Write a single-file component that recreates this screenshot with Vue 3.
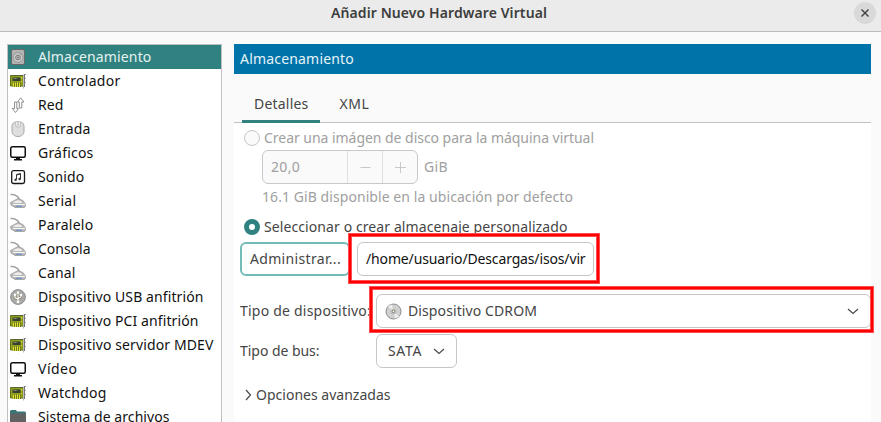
<script setup>
const items = [
  { label: 'Almacenamiento', icon: 'disk', w: 113.5 },
  { label: 'Controlador', icon: 'card', w: 82.5 },
  { label: 'Red', icon: 'net', w: 25.5 },
  { label: 'Entrada', icon: 'mouse', w: 52.5 },
  { label: 'Gráficos', icon: 'screen', w: 55.5 },
  { label: 'Sonido', icon: 'sound', w: 46.5 },
  { label: 'Serial', icon: 'port', w: 38.5 },
  { label: 'Paralelo', icon: 'port', w: 55.5 },
  { label: 'Consola', icon: 'port', w: 52.5 },
  { label: 'Canal', icon: 'port', w: 37.5 },
  { label: 'Dispositivo USB anfitrión', icon: 'usb', w: 165.5 },
  { label: 'Dispositivo PCI anfitrión', icon: 'card', w: 160.5 },
  { label: 'Dispositivo servidor MDEV', icon: 'card', w: 175.5 },
  { label: 'Vídeo', icon: 'screen', w: 39.5 },
  { label: 'Watchdog', icon: 'card', w: 68.5 },
  { label: 'Sistema de archivos', icon: 'folder', w: 131.5 }
]

// Tracks a label so that it fills the given width in pixels.
const vFit = {
  mounted(el, { value }) {
    const natural = el.getBoundingClientRect().width
    el.style.letterSpacing = `${(value - natural) / el.textContent.length}px`
  }
}
</script>

<template>
  <div class="window">
    <header class="titlebar">
      <h1><span v-fit="216">Añadir Nuevo Hardware Virtual</span></h1>
      <button class="close" aria-label="Cerrar">
        <svg width="8" height="8" viewBox="0 0 8 8"><path d="M.5.5l7 7M7.5.5l-7 7" stroke="#3d3d3d" stroke-width="1.400" /></svg>
      </button>
    </header>

    <div class="body">
      <ul class="list">
        <li v-for="(item, i) in items" :key="item.label" :class="{ selected: i === 0 }">
          <svg class="icon" width="16" height="16" viewBox="0 0 16 16">
            <g v-if="item.icon === 'disk'">
              <rect x="1.5" y=".5" width="13" height="15" rx="1.5" fill="#b4b4b4" stroke="#696969" />
              <circle cx="8" cy="8.500" r="5" fill="#c6c6c6" stroke="#979797" />
              <circle cx="8" cy="8.500" r="2.300" fill="#bdbdbd" stroke="#777" />
              <path d="M8.500 8l3-4" stroke="#999" />
              <circle cx="8" cy="8.500" r=".8" fill="#666" />
            </g>
            <g v-else-if="item.icon === 'card'">
              <path d="M.5 2.500h13v10.500H.5z" fill="#8f9e1d" stroke="#65701a" />
              <path d="M1 2.500h12" stroke="#5c6534" />
              <path d="M2.500 4.500h8v3.500h-8z" fill="#383f33" />
              <path d="M3.500 5.500h3" stroke="#7c8570" />
              <path d="M11.500 4v2M11.500 8v1" stroke="#c9cf42" />
              <path d="M3 9.500v4.500h8V9.500z" fill="#727c16" />
              <path d="M3.500 9.500v4.500M5.500 9.500v4.500M7.500 9.500v4.500M9.500 9.500v4.500" stroke="#dde03a" />
              <path d="M13.500 1.500v14" stroke="#b9bab4" />
              <path d="M14.500 1v13" stroke="#757575" />
              <path d="M15 1.500h1M15 5.500h1M15 9.500h1" stroke="#a5a5a5" />
            </g>
            <g v-else-if="item.icon === 'net'" fill="#fff" stroke="#858585" stroke-width=".9">
              <path d="M4.500 5h2.300v6.500H8.500l-3 4-3.300-4h2.300z" />
              <path d="M9.300 11V5H7.500l3.200-4.200L14 5h-2.200v6z" />
            </g>
            <g v-else-if="item.icon === 'mouse'">
              <path d="M2 6C2 2.500 3.500 .8 8 .8s6 1.700 6 5.200v4c0 3.500-2.500 5.500-6 5.500S2 13.500 2 10z" fill="#dedede" stroke="#a5a5a5" />
              <path d="M5.200 1.500L6 5.500q2 1.500 4 0l.8-4" fill="#f3f3f3" stroke="#b5b5b5" stroke-width=".8" />
              <path d="M8 1.500v3.500" stroke="#aaa" />
            </g>
            <g v-else-if="item.icon === 'screen'">
              <rect x=".75" y="1.750" width="14.500" height="10.500" rx="1.500" fill="#fff" stroke="#111" stroke-width="1.500" />
              <path d="M6 12.500h4V14h2v1.500H4V14h2z" fill="#111" />
            </g>
            <g v-else-if="item.icon === 'sound'">
              <rect x="1.700" y="1.700" width="12.800" height="12.800" rx="1.800" fill="#fff" stroke="#171717" stroke-width="1.300" />
              <path d="M6.500 10.500V5.500l4-1V10M6.500 6l4-1" fill="none" stroke="#333" />
              <circle cx="5.600" cy="10.700" r="1.200" fill="#333" /><circle cx="9.600" cy="10" r="1.200" fill="#333" />
            </g>
            <g v-else-if="item.icon === 'port'">
              <path d="M.5 1.500C5 1.200 8 3 9.500 6.500" fill="none" stroke="#a3a3a3" stroke-width="1.600" />
              <path d="M.5 9.500L8 5.500l5 2 2.300 3.500v2.500l-1 1H5L1 12z" fill="#bcbcbc" stroke="#9b9b9b" stroke-width=".8" />
              <path d="M1.500 9.500L8 6.500l4.500 2-1 2H5z" fill="#eee" stroke="#aaa" stroke-width=".6" />
              <path d="M3 11.500h12" stroke="#f4f4f4" />
              <path d="M5.500 13.300h6.500" stroke="#6a91c4" stroke-width="1.200" />
            </g>
            <g v-else-if="item.icon === 'usb'">
              <circle cx="8" cy="8" r="7.400" fill="#a9a9a9" stroke="#8d8d8d" />
              <g fill="none" stroke="#756f55" stroke-width="2.200"><path d="M8 3v9.500M8 10.500L5 8.500V6M8 9.500l3-1.500V6" /></g>
              <g fill="none" stroke="#fff" stroke-width="1.200"><path d="M8 3v9.500M8 10.500L5 8.500V6M8 9.500l3-1.500V6" /></g>
              <path d="M8 1.500L6.300 4.500h3.400z" fill="#fff" />
              <circle cx="8" cy="12.700" r="1.500" fill="#fff" /><circle cx="5" cy="5.800" r="1.200" fill="#fff" />
              <path d="M10 5h2v2h-2z" fill="#fff" />
            </g>
            <g v-else>
              <path d="M0 2.500Q0 1 1.500 1H6l1 1.500h7.500Q16 2.500 16 4v12H0z" fill="#397477" />
              <path d="M0 5.500q0-1 1-1h14q1 0 1 1V16H0z" fill="#626262" />
            </g>
          </svg>
          <span v-fit="item.w">{{ item.label }}</span>
        </li>
      </ul>

      <main class="panel">
        <div class="banner"><span v-fit="114">Almacenamiento</span></div>
        <nav class="tabs">
          <button class="tab active"><span v-fit="54.5">Detalles</span></button>
          <button class="tab"><span v-fit="30">XML</span></button>
        </nav>

        <section class="page">
          <label class="radio-row disabled"><i class="radio"></i><span v-fit="330">Crear una imágen de disco para la máquina virtual</span></label>
          <div class="size-row disabled">
            <div class="spin">
              <span class="value"><span v-fit="29">20,0</span></span>
              <span class="step"><svg width="11" height="11"><path d="M.5 5.500h10" stroke="#c9c9c9" /></svg></span>
              <span class="step"><svg width="11" height="11"><path d="M0 5.500h11M5.500 0v11" stroke="#c9c9c9" /></svg></span>
            </div>
            <span v-fit="24">GiB</span>
          </div>
          <p class="hint disabled"><span v-fit="311">16.1 GiB disponible en la ubicación por defecto</span></p>
          <label class="radio-row second"><i class="radio on"></i><span v-fit="303.5">Seleccionar o crear almacenaje personalizado</span></label>
          <div class="path-row">
            <button class="manage"><span v-fit="91">Administrar...</span></button>
            <div class="entry"><span v-fit="219.5">/home/usuario/Descargas/isos/vir</span></div>
          </div>

          <div class="field device">
            <div class="name"><span v-fit="131">Tipo de dispositivo:</span></div>
            <div class="select wide">
              <svg width="17" height="17" viewBox="0 0 17 17">
                <circle cx="8.500" cy="8.500" r="7.500" fill="#d0d0d0" stroke="#8b8b8b" />
                <path d="M8.500 8.500L3 3.500A7 7 0 0 1 7 1.500zM8.500 8.500l5.500 5a7 7 0 0 1-4 2z" fill="#ededed" />
                <circle cx="8.500" cy="8.500" r="2.600" fill="#ddd" stroke="#aaa" stroke-width=".7" />
                <circle cx="8.500" cy="8.500" r="1.300" fill="#fff" stroke="#77715f" />
              </svg>
              <span v-fit="129">Dispositivo CDROM</span>
              <svg class="chevron" width="12" height="7"><path d="M1 1l5 4.500L11 1" /></svg>
            </div>
          </div>
          <div class="field bus">
            <div class="name"><span v-fit="79.5">Tipo de bus:</span></div>
            <div class="select">
              <span v-fit="34">SATA</span>
              <svg class="chevron" width="12" height="7"><path d="M1 1l5 4.500L11 1" /></svg>
            </div>
          </div>
          <div class="expander">
            <svg class="chevron" width="7" height="12"><path d="M1 1l4.500 5L1 11" /></svg>
            <span v-fit="134.5">Opciones avanzadas</span>
          </div>
        </section>
      </main>
    </div>

    <div class="mark mark-path"></div>
    <div class="mark mark-device"></div>
  </div>
</template>

<style>
body { background: #fafafa; overflow: hidden; }
</style>

<style scoped>
* { box-sizing: border-box; }
.window {
  position: relative;
  display: flex;
  flex-direction: column;
  width: 881px;
  height: 422px;
  overflow: hidden;
  background: #fafafa;
  color: #454545;
  font: 14px/20px "Noto Sans", sans-serif;
  white-space: nowrap;
}
button { font: inherit; color: inherit; padding: 0; border: 0; background: none; }
svg { display: block; flex: none; }
.titlebar {
  display: flex;
  flex: none;
  height: 32px;
  padding: 2px 5px 0 0;
  justify-content: flex-end;
  background: #ebebeb;
  border-bottom: 1px solid #bdbdbd;
}
h1 {
  flex: 1;
  margin: 0;
  padding: 1px 0 0 331px;
  font-size: 14px;
  line-height: 20px;
  font-weight: 600;
  color: #3d3d3d;
}
.close {
  display: grid;
  place-items: center;
  width: 22px;
  height: 22px;
  border-radius: 50%;
  background: #d9d9d9;
}
.body { display: flex; flex: 1; min-height: 0; padding: 12px 10px 0 7px; gap: 12px; }
.list {
  width: 215px;
  height: 400px;
  flex: none;
  margin: 0;
  padding: 0;
  list-style: none;
  background: #fff;
  border: 1px solid #c0c0c0;
  color: #111;
}
.list li { display: flex; align-items: center; height: 24px; gap: 12px; padding-left: 2px; }
.list li.selected { background: #308280; color: #e5f2f1; }
.panel { flex: 1; display: flex; flex-direction: column; }
.banner { flex: none; height: 30px; padding: 5px 6px; background: #0073a9; color: #e6f3f9; }
.tabs {
  display: flex;
  flex: none;
  height: 49px;
  padding: 10px 8px 0;
  border-bottom: 1px solid #c2c2c2;
}
.tab { height: 39px; padding: 4px 11px 0 12px; border-bottom: 3px solid transparent; }
.tab + .tab { padding-left: 20px; }
.tab.active { border-color: #308280; }
.page { flex: 1; min-height: 0; background: #fff; padding: 5px 0 0 6px; }
.radio-row { display: flex; align-items: center; height: 20px; padding-left: 4px; gap: 4px; }
.radio { width: 16px; height: 16px; border: 1px solid #c6c6c6; border-radius: 50%; background: #fafafa; }
.radio.on { border: 5px solid #308280; background: #fff; }
.disabled { color: #a0a0a0; }
.size-row { display: flex; align-items: center; height: 34px; margin: 2px 0 0 22px; gap: 6px; }
.spin {
  display: flex;
  width: 156px;
  height: 34px;
  border: 1px solid #c9c9c9;
  border-radius: 6px;
  background: #fafafa;
}
.value { flex: 1; padding: 6px 8px; }
.step { display: grid; place-items: center; width: 35px; border-left: 1px solid #dfdfdf; }
.hint { margin: 3px 0 0 22px; }
.second { margin-top: 10px; }
.path-row { display: flex; height: 34px; gap: 7px; margin-top: 5px; }
.manage { width: 110px; border: 2px solid #71bbb8; border-radius: 6px; text-align: left; padding-left: 8px; color: #454545; }
.entry {
  width: 237px;
  border: 1px solid #c6c6c6;
  border-radius: 6px;
  padding: 6px 8px;
  color: #111;
}
.field { display: flex; align-items: center; height: 34px; }
.name { width: 136px; flex: none; }
.device { margin-top: 18px; }
.bus { margin-top: 6px; }
.select {
  display: flex;
  align-items: center;
  width: 81px;
  height: 34px;
  padding: 0 11px;
  border: 1px solid #c6c6c6;
  border-radius: 6px;
  background: #fff;
}
.wide { width: 495px; padding-left: 8px; gap: 6px; }
.chevron { margin-left: auto; fill: none; stroke: #494949; stroke-width: 1.200; }
.expander { display: flex; align-items: center; height: 20px; margin-top: 17px; padding-left: 5px; gap: 4px; }
.expander .chevron { margin-left: 0; }
.mark { position: absolute; border: 2px solid #f00; box-shadow: 0 0 0 1px #ff4d4d, inset 0 0 0 1px #ff4d4d; }
.mark-path { left: 349px; top: 234px; width: 250px; height: 49px; }
.mark-device { left: 370px; top: 287px; width: 503px; height: 45px; }
</style>
